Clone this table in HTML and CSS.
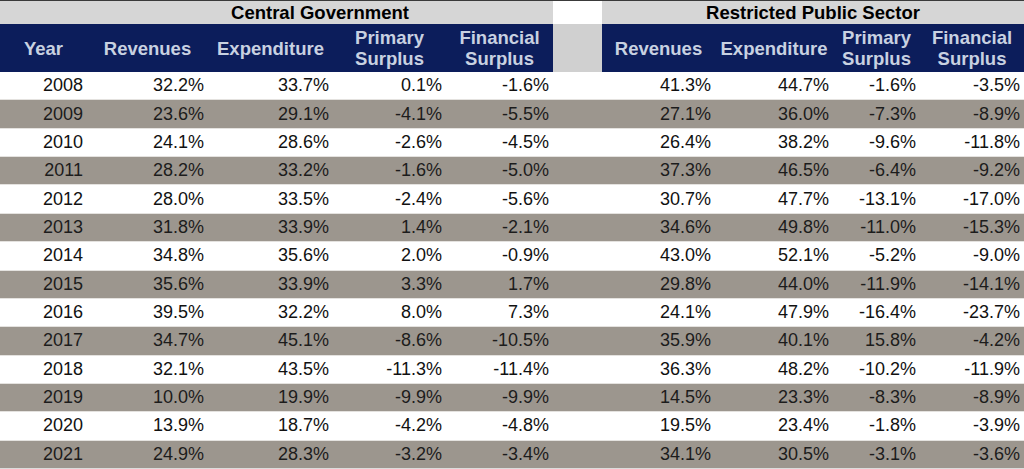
FILE: index.html
```html
<!DOCTYPE html>
<html lang="en">
<head>
<meta charset="utf-8">
<title>Central Government and Restricted Public Sector</title>
<link rel="stylesheet" href="styles.css">
</head>
<body>
<div class="sheet">
  <div class="row group">
    <div class="cell g-blank"></div>
    <div class="cell g-title g-left">Central Government</div>
    <div class="cell g-gap"></div>
    <div class="cell g-title g-right">Restricted Public Sector</div>
  </div>
  <div class="row head">
    <div class="cell h">Year</div>
    <div class="cell h">Revenues</div>
    <div class="cell h">Expenditure</div>
    <div class="cell h">Primary<br>Surplus</div>
    <div class="cell h">Financial<br>Surplus</div>
    <div class="cell h-gap"></div>
    <div class="cell h">Revenues</div>
    <div class="cell h">Expenditure</div>
    <div class="cell h">Primary<br>Surplus</div>
    <div class="cell h">Financial<br>Surplus</div>
  </div>
  <div class="body">
    <div class="row data"><div class="cell yr">2008</div><div class="cell">32.2%</div><div class="cell">33.7%</div><div class="cell">0.1%</div><div class="cell">-1.6%</div><div class="cell gap"></div><div class="cell">41.3%</div><div class="cell">44.7%</div><div class="cell">-1.6%</div><div class="cell">-3.5%</div></div>
    <div class="row data alt"><div class="cell yr">2009</div><div class="cell">23.6%</div><div class="cell">29.1%</div><div class="cell">-4.1%</div><div class="cell">-5.5%</div><div class="cell gap"></div><div class="cell">27.1%</div><div class="cell">36.0%</div><div class="cell">-7.3%</div><div class="cell">-8.9%</div></div>
    <div class="row data"><div class="cell yr">2010</div><div class="cell">24.1%</div><div class="cell">28.6%</div><div class="cell">-2.6%</div><div class="cell">-4.5%</div><div class="cell gap"></div><div class="cell">26.4%</div><div class="cell">38.2%</div><div class="cell">-9.6%</div><div class="cell">-11.8%</div></div>
    <div class="row data alt"><div class="cell yr">2011</div><div class="cell">28.2%</div><div class="cell">33.2%</div><div class="cell">-1.6%</div><div class="cell">-5.0%</div><div class="cell gap"></div><div class="cell">37.3%</div><div class="cell">46.5%</div><div class="cell">-6.4%</div><div class="cell">-9.2%</div></div>
    <div class="row data"><div class="cell yr">2012</div><div class="cell">28.0%</div><div class="cell">33.5%</div><div class="cell">-2.4%</div><div class="cell">-5.6%</div><div class="cell gap"></div><div class="cell">30.7%</div><div class="cell">47.7%</div><div class="cell">-13.1%</div><div class="cell">-17.0%</div></div>
    <div class="row data alt"><div class="cell yr">2013</div><div class="cell">31.8%</div><div class="cell">33.9%</div><div class="cell">1.4%</div><div class="cell">-2.1%</div><div class="cell gap"></div><div class="cell">34.6%</div><div class="cell">49.8%</div><div class="cell">-11.0%</div><div class="cell">-15.3%</div></div>
    <div class="row data"><div class="cell yr">2014</div><div class="cell">34.8%</div><div class="cell">35.6%</div><div class="cell">2.0%</div><div class="cell">-0.9%</div><div class="cell gap"></div><div class="cell">43.0%</div><div class="cell">52.1%</div><div class="cell">-5.2%</div><div class="cell">-9.0%</div></div>
    <div class="row data alt"><div class="cell yr">2015</div><div class="cell">35.6%</div><div class="cell">33.9%</div><div class="cell">3.3%</div><div class="cell">1.7%</div><div class="cell gap"></div><div class="cell">29.8%</div><div class="cell">44.0%</div><div class="cell">-11.9%</div><div class="cell">-14.1%</div></div>
    <div class="row data"><div class="cell yr">2016</div><div class="cell">39.5%</div><div class="cell">32.2%</div><div class="cell">8.0%</div><div class="cell">7.3%</div><div class="cell gap"></div><div class="cell">24.1%</div><div class="cell">47.9%</div><div class="cell">-16.4%</div><div class="cell">-23.7%</div></div>
    <div class="row data alt"><div class="cell yr">2017</div><div class="cell">34.7%</div><div class="cell">45.1%</div><div class="cell">-8.6%</div><div class="cell">-10.5%</div><div class="cell gap"></div><div class="cell">35.9%</div><div class="cell">40.1%</div><div class="cell">15.8%</div><div class="cell">-4.2%</div></div>
    <div class="row data"><div class="cell yr">2018</div><div class="cell">32.1%</div><div class="cell">43.5%</div><div class="cell">-11.3%</div><div class="cell">-11.4%</div><div class="cell gap"></div><div class="cell">36.3%</div><div class="cell">48.2%</div><div class="cell">-10.2%</div><div class="cell">-11.9%</div></div>
    <div class="row data alt"><div class="cell yr">2019</div><div class="cell">10.0%</div><div class="cell">19.9%</div><div class="cell">-9.9%</div><div class="cell">-9.9%</div><div class="cell gap"></div><div class="cell">14.5%</div><div class="cell">23.3%</div><div class="cell">-8.3%</div><div class="cell">-8.9%</div></div>
    <div class="row data"><div class="cell yr">2020</div><div class="cell">13.9%</div><div class="cell">18.7%</div><div class="cell">-4.2%</div><div class="cell">-4.8%</div><div class="cell gap"></div><div class="cell">19.5%</div><div class="cell">23.4%</div><div class="cell">-1.8%</div><div class="cell">-3.9%</div></div>
    <div class="row data alt"><div class="cell yr">2021</div><div class="cell">24.9%</div><div class="cell">28.3%</div><div class="cell">-3.2%</div><div class="cell">-3.4%</div><div class="cell gap"></div><div class="cell">34.1%</div><div class="cell">30.5%</div><div class="cell">-3.1%</div><div class="cell">-3.6%</div></div>
  </div>
</div>
</body>
</html>
```

FILE: styles.css
```css
html, body {
  margin: 0;
  padding: 0;
  background: #ffffff;
}

.sheet {
  width: 1024px;
  height: 469px;
  box-sizing: border-box;
  border-top: 1px solid #3a3a3a;
  display: flex;
  flex-direction: column;
  font-family: "Liberation Sans", Arial, sans-serif;
  --cols: 87px 121px 125px 113px 107px 49px 113px 118px 87px 104px;
}

.row {
  display: grid;
  grid-template-columns: var(--cols);
}

.cell {
  display: flex;
  align-items: center;
  justify-content: flex-end;
  box-sizing: border-box;
}

/* group header row */
.group {
  height: 23px;
  grid-template-columns: 87px 466px 49px 422px;
  background: #d6d6d6;
}
.g-title {
  justify-content: center;
  font-weight: bold;
  font-size: 18.5px;
  color: #000;
}
.g-gap {
  background: #ffffff;
}

/* column header row */
.head {
  height: 48px;
  background: #0c1d5b;
}
.h {
  justify-content: center;
  text-align: center;
  font-weight: bold;
  font-size: 18.5px;
  line-height: 21px;
  color: #c8d1e1;
}
.h-gap {
  background: #d0d0d0;
}

/* body */
.body {
  flex: 1;
  display: flex;
  flex-direction: column;
  border-bottom: 1px solid #dcdcdc;
}
.data {
  flex: 1;
  font-size: 18px;
  color: #111;
  background: #ffffff;
  border-top: 1px solid #e4e2df;
}
.data:first-child {
  border-top: 0;
}
.data.alt {
  background: #9c968e;
  color: #1c1c1c;
}
.data .cell {
  padding-right: 4px;
}
.data .gap {
  padding: 0;
}
```
